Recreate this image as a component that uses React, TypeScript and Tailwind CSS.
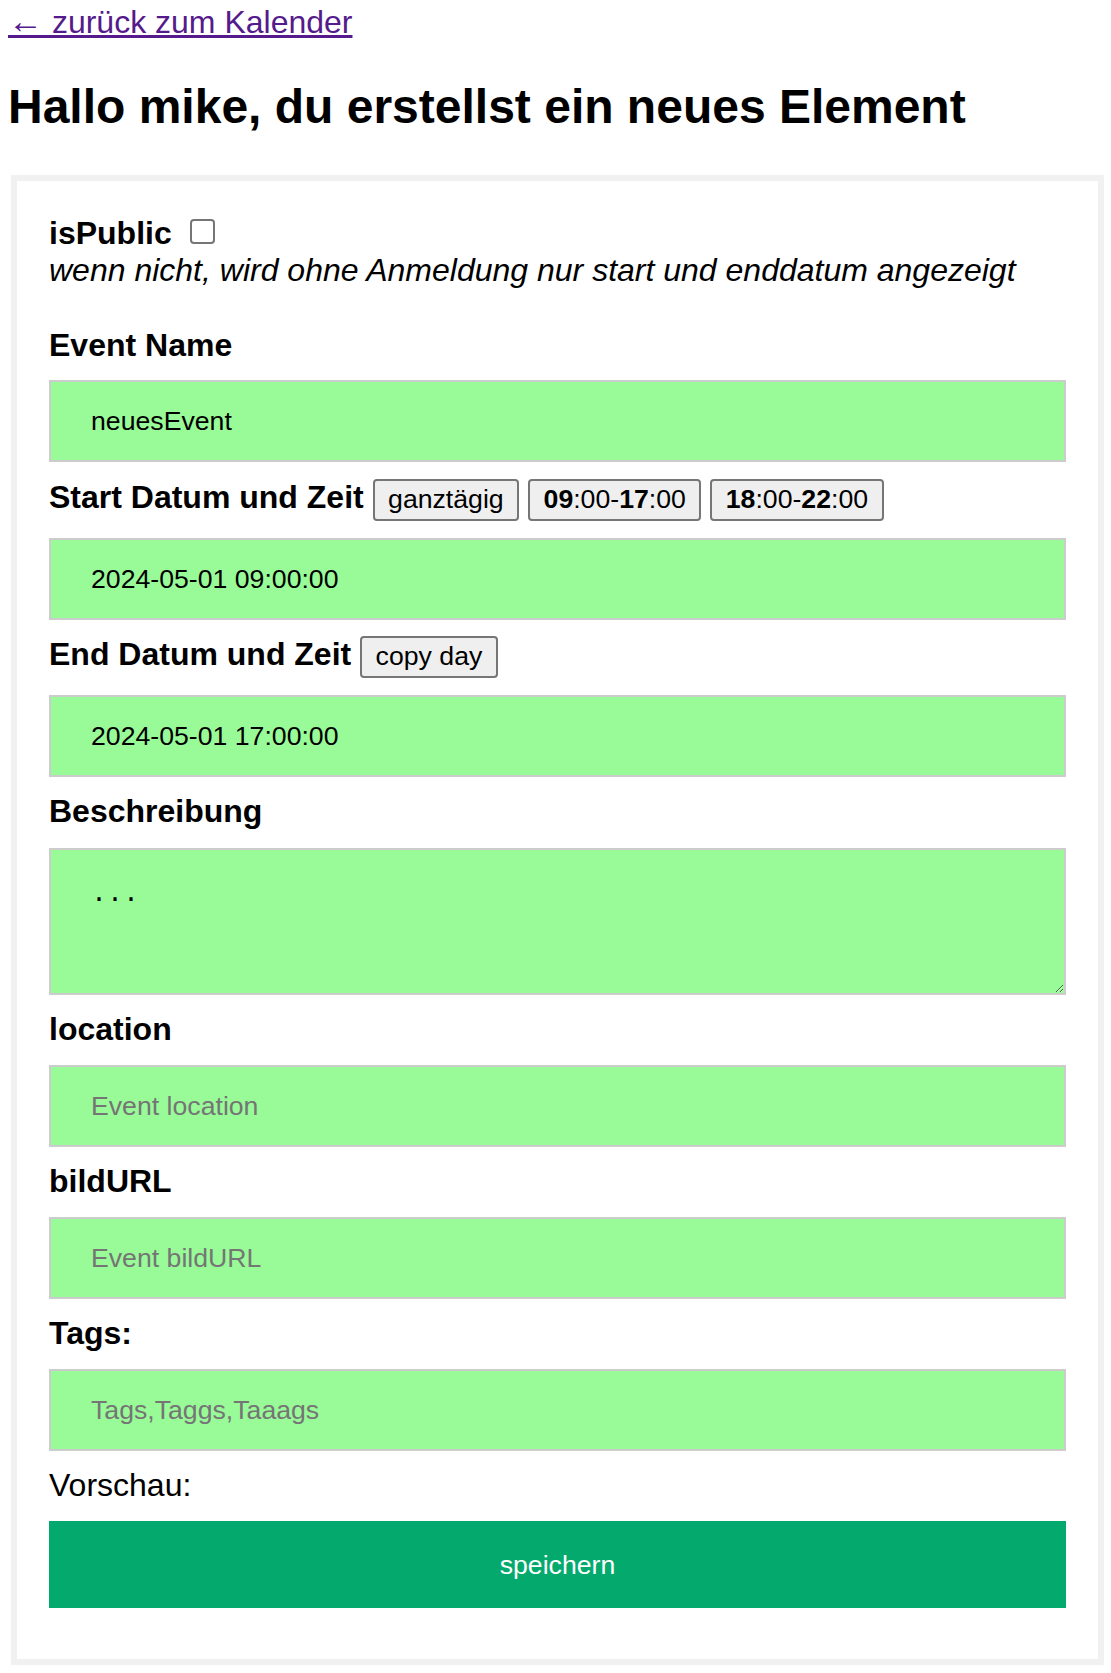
import { useState } from 'react';

const labelCls = 'block text-[32px] leading-[37px] font-bold';
const inputCls =
  'block w-full h-[82px] border-2 border-[#cccccc] bg-[#98fb98] px-[40px] text-[26.67px] text-black placeholder:text-[#757575] outline-none';
const smallBtn =
  'inline-block h-[42px] px-[13.5px] pt-[3px] pb-[5px] border-2 border-[#767676] rounded-[4px] bg-[#efefef] text-[26.67px] leading-[30px] font-normal text-black align-baseline';

const App = () => {
  const [isPublic, setIsPublic] = useState(false);
  const [name, setName] = useState('neuesEvent');
  const [start, setStart] = useState('2024-05-01 09:00:00');
  const [end, setEnd] = useState('2024-05-01 17:00:00');
  const [desc, setDesc] = useState('...');

  const setRange = (from: string, to: string) => {
    const day = start.slice(0, 10);
    setStart(`${day} ${from}`);
    setEnd(`${day} ${to}`);
  };

  return (
    <div className="min-h-[1673px] bg-white pl-[8px] pr-[7px] pt-[4px] font-['Liberation_Sans',Arial,sans-serif] text-black">
      <div className="h-[37px] text-[32px] leading-[37px]">
        <a href="#" className="text-[#551a8b] underline">
          <span className="text-[35px] leading-[0px]">←</span> zurück zum Kalender
        </a>
      </div>

      <h2 className="mt-[38px] text-[48px] leading-[55px] font-bold">
        Hallo mike, du erstellst ein neues Element
      </h2>

      <div className="mt-[41px] ml-[3px] w-[1093px] border-[6px] border-[#f1f1f1] px-[32px] pt-[34px] pb-[51px]">
        <div className="flex h-[37px]">
          <span className="text-[32px] leading-[37px] font-bold">isPublic</span>
          <input
            type="checkbox"
            checked={isPublic}
            onChange={e => setIsPublic(e.target.checked)}
            className="ml-[18px] mt-[4px] h-[25px] w-[25px] appearance-none rounded-[4px] border-2 border-[#767676] bg-white checked:bg-[#0075ff]"
          />
        </div>
        <p className="text-[32px] leading-[37px] italic">
          wenn nicht, wird ohne Anmeldung nur start und enddatum angezeigt
        </p>

        <label className={`${labelCls} mt-[38px]`}>Event Name</label>
        <input className={`${inputCls} mt-[16px]`} value={name} onChange={e => setName(e.target.value)} />

        <div className={`${labelCls} mt-[17px]`}>
          Start Datum und Zeit{' '}
          <button className={smallBtn} onClick={() => setRange('00:00:00', '23:59:59')}>
            ganztägig
          </button>{' '}
          <button className={smallBtn} onClick={() => setRange('09:00:00', '17:00:00')}>
            <b>09</b>:00-<b>17</b>:00
          </button>{' '}
          <button className={smallBtn} onClick={() => setRange('18:00:00', '22:00:00')}>
            <b>18</b>:00-<b>22</b>:00
          </button>
        </div>
        <input className={`${inputCls} mt-[17px]`} value={start} onChange={e => setStart(e.target.value)} />

        <div className={`${labelCls} mt-[16px]`}>
          End Datum und Zeit{' '}
          <button className={smallBtn} onClick={() => setEnd(start.slice(0, 10) + end.slice(10))}>
            copy day
          </button>
        </div>
        <input className={`${inputCls} mt-[17px]`} value={end} onChange={e => setEnd(e.target.value)} />

        <label className={`${labelCls} mt-[16px]`}>Beschreibung</label>
        <textarea
          className="mt-[18px] block h-[147px] w-full border-2 border-[#cccccc] bg-[#98fb98] px-[40px] py-[24px] font-['Liberation_Mono',monospace] text-[26.67px] text-black outline-none"
          value={desc}
          onChange={e => setDesc(e.target.value)}
        />

        <label className={`${labelCls} mt-[16px]`}>location</label>
        <input className={`${inputCls} mt-[17px]`} placeholder="Event location" />

        <label className={`${labelCls} mt-[16px]`}>bildURL</label>
        <input className={`${inputCls} mt-[17px]`} placeholder="Event bildURL" />

        <label className={`${labelCls} mt-[16px]`}>Tags:</label>
        <input className={`${inputCls} mt-[17px]`} placeholder="Tags,Taggs,Taaags" />

        <div className="mt-[16px] text-[32px] leading-[37px]">Vorschau:</div>

        <button className="mt-[17px] flex h-[87px] w-full items-center justify-center bg-[#04aa6d] text-[26.67px] text-white">
          speichern
        </button>
      </div>
    </div>
  );
};

export default App;
